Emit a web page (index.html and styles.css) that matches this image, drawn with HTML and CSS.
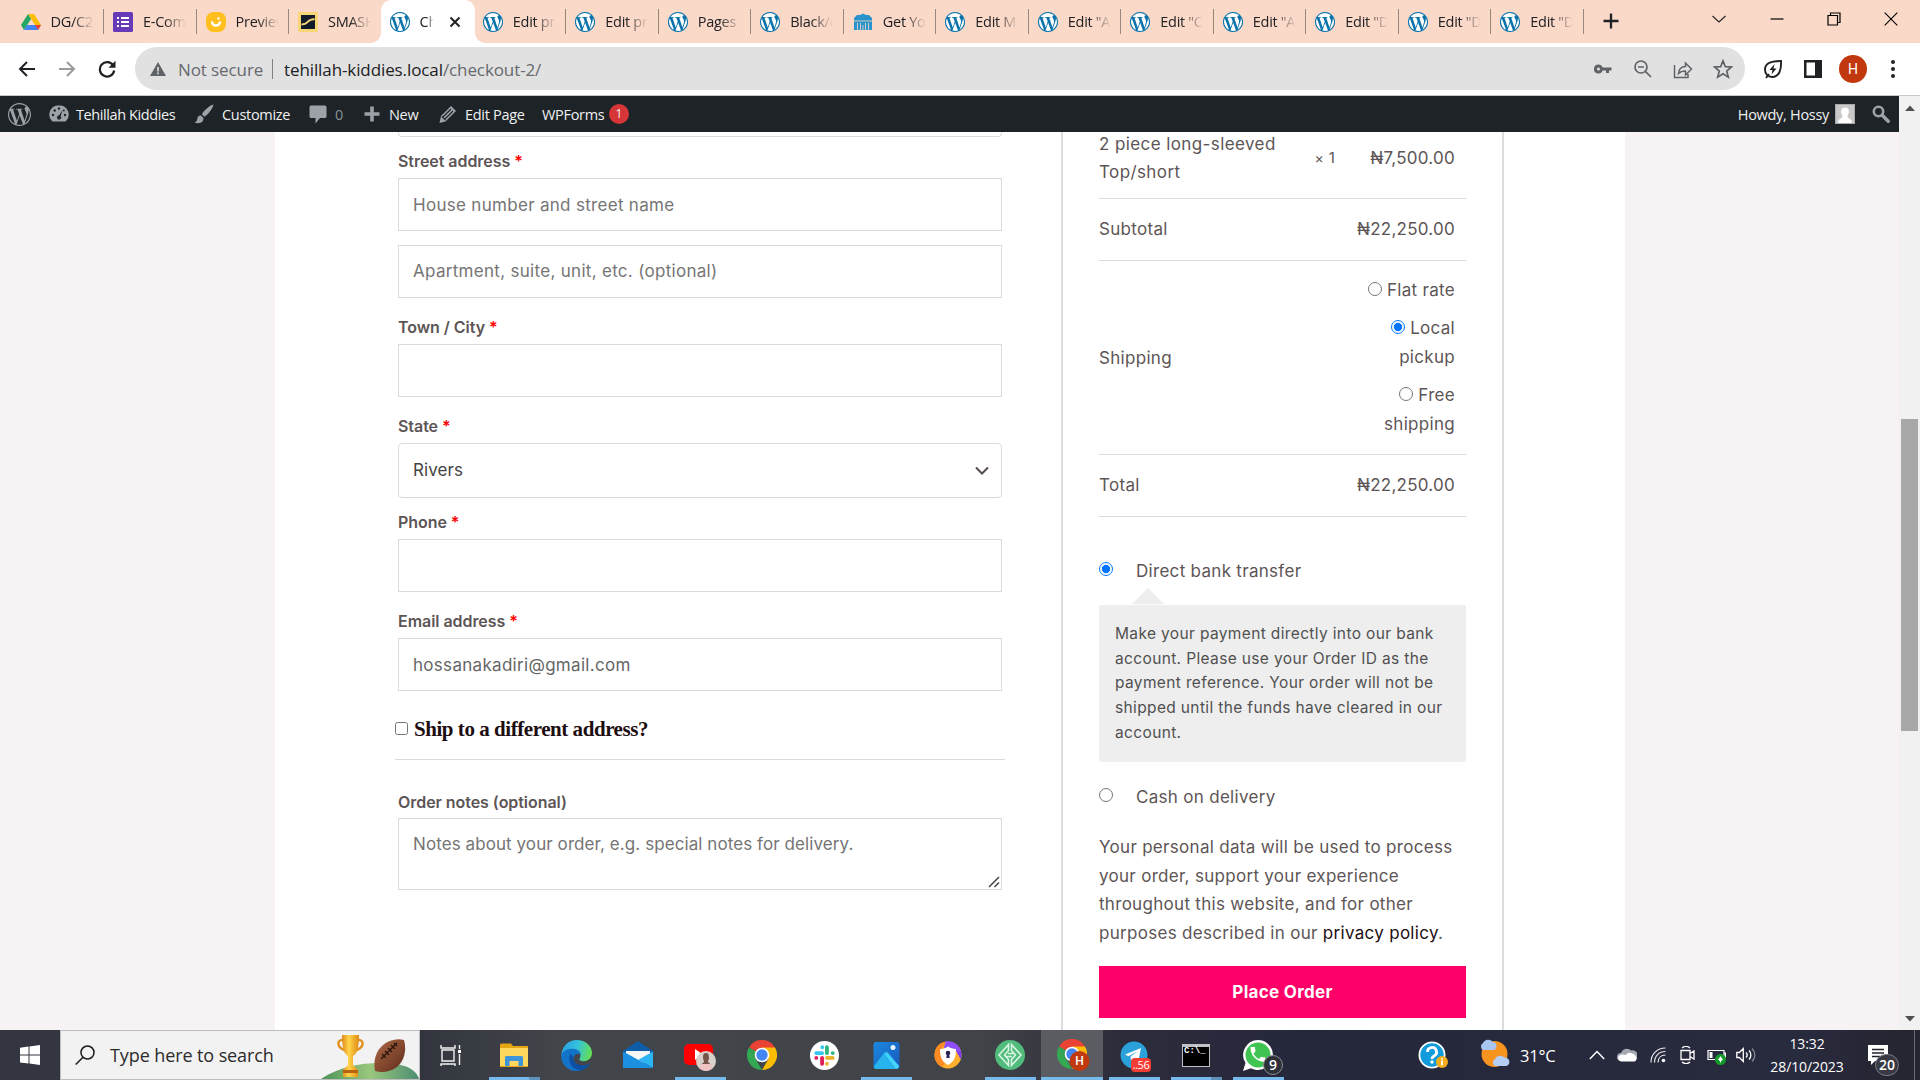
FILE: index.html
```html
<!DOCTYPE html>
<html lang="en">
<head>
<meta charset="utf-8">
<title>Checkout</title>
<link rel="stylesheet" href="styles.css">
</head>
<body>
<svg class="defs" width="0" height="0">
  <defs>
    <symbol id="wp" viewBox="0 0 24 24"><path d="M21.469 6.825c.84 1.537 1.318 3.3 1.318 5.175 0 3.979-2.156 7.456-5.363 9.325l3.295-9.527c.615-1.54.82-2.771.82-3.864 0-.405-.026-.78-.07-1.11m-7.981.105c.647-.03 1.232-.105 1.232-.105.582-.075.514-.93-.067-.899 0 0-1.755.135-2.88.135-1.064 0-2.85-.15-2.85-.15-.585-.03-.661.855-.075.885 0 0 .54.061 1.125.09l1.68 4.605-2.37 7.08L5.354 6.9c.649-.03 1.234-.1 1.234-.1.585-.075.516-.93-.065-.896 0 0-1.746.138-2.874.138-.2 0-.438-.008-.69-.015C4.911 3.15 8.235 1.215 12 1.215c2.809 0 5.365 1.072 7.286 2.833-.046-.003-.091-.009-.141-.009-1.06 0-1.812.923-1.812 1.914 0 .89.513 1.643 1.06 2.531.411.72.89 1.643.89 2.977 0 .915-.354 1.994-.821 3.479l-1.075 3.585-3.9-11.61.001.014zM12 22.784c-1.059 0-2.081-.153-3.048-.437l3.237-9.406 3.315 9.087c.024.053.05.101.078.149-1.12.393-2.325.609-3.582.609M1.211 12c0-1.564.336-3.05.935-4.39L7.29 21.709C3.694 19.96 1.212 16.271 1.211 12M12 0C5.385 0 0 5.385 0 12s5.385 12 12 12 12-5.385 12-12S18.615 0 12 0"/></symbol>
    <symbol id="wpfav" viewBox="0 0 24 24"><circle cx="12" cy="12" r="12" fill="#a5cbe0"/><circle cx="12" cy="12" r="10.8" fill="#fff"/><use href="#wp" width="24" height="24" fill="#0b73aa"/></symbol>
    <symbol id="chrome" viewBox="0 0 30 30"><path d="M15 15 2 7.500A15 15 0 0 1 28 7.500z" fill="#ea4335"/><path d="M2 7.500 8.500 18.700 15 30A15 15 0 0 1 2 7.500z" fill="#34a853"/><path d="M28 7.500A15 15 0 0 1 15 30l6.500-11.300L15 7.500z" fill="#fbbc04"/><path d="M2 7.500 8.600 18.700 15 15z" fill="#34a853"/><circle cx="15" cy="15" r="7.300" fill="#fff"/><circle cx="15" cy="15" r="5.700" fill="#4285f4"/></symbol>
  </defs>
</svg>

<div class="tabstrip">
  <div class="tab"><svg class="fav" viewBox="0 0 20 20"><path d="M7 2h6l7 11h-6z" fill="#fbbc04"/><path d="M7 2 0 13l3 5 7-11z" fill="#23a566"/><path d="M3 18h14l3-5H6z" fill="#4285f4"/><path d="m17 18 3-5h-6z" fill="#ea4335"/></svg><span class="title">DG/C2</span></div>
  <div class="tab"><svg class="fav" viewBox="0 0 20 20"><rect width="20" height="20" rx="1.500" fill="#673ab7"/><path d="M4 5h2v2H4zm4 0h8v2H8zM4 9h2v2H4zm4 0h8v2H8zm-4 4h2v2H4zm4 0h8v2H8z" fill="#fff"/></svg><span class="title">E-Com</span></div>
  <div class="tab"><svg class="fav" viewBox="0 0 20 20"><rect width="20" height="20" rx="7.500" fill="#ffbf1f"/><path d="M6 9.500a4 4 0 0 0 8 0" fill="none" stroke="#fff" stroke-width="2.500"/><circle cx="12.500" cy="6.500" r="1.200" fill="#fff"/></svg><span class="title">Preview</span></div>
  <div class="tab last"><svg class="fav" viewBox="0 0 20 20"><rect width="20" height="20" rx="2" fill="#f7d774"/><rect x="3" y="3" width="14" height="14" fill="#111c2b"/><path d="M3.500 12.500c5 0 5-1.500 6.500-3s3-2 6.500-2.500" fill="none" stroke="#f7d774" stroke-width="1.800"/></svg><span class="title">SMASH</span></div>
  <div class="tab active"><svg class="fav"><use href="#wpfav"/></svg><span class="title">Che</span><svg class="close" viewBox="0 0 12 12"><path d="m1.500 1.500 9 9m0-9-9 9" stroke="#202124" stroke-width="2"/></svg></div>
  <div class="tab"><svg class="fav"><use href="#wpfav"/></svg><span class="title">Edit pro</span></div>
  <div class="tab"><svg class="fav"><use href="#wpfav"/></svg><span class="title">Edit pro</span></div>
  <div class="tab"><svg class="fav"><use href="#wpfav"/></svg><span class="title">Pages</span></div>
  <div class="tab"><svg class="fav"><use href="#wpfav"/></svg><span class="title">Black/c</span></div>
  <div class="tab"><svg class="fav" viewBox="0 0 20 20"><path d="M1 6 4 3h3l3-1.500L13 3h3l3 3v12H1z" fill="#2b93cb"/><path d="M4.500 18v-7m3 7v-7m5 7v-7m3 7v-7M1 9h18M10 18v-5" stroke="#fbd9c8" stroke-width=".8"/></svg><span class="title">Get You</span></div>
  <div class="tab"><svg class="fav"><use href="#wpfav"/></svg><span class="title">Edit M</span></div>
  <div class="tab"><svg class="fav"><use href="#wpfav"/></svg><span class="title">Edit "A</span></div>
  <div class="tab"><svg class="fav"><use href="#wpfav"/></svg><span class="title">Edit "C</span></div>
  <div class="tab"><svg class="fav"><use href="#wpfav"/></svg><span class="title">Edit "A</span></div>
  <div class="tab"><svg class="fav"><use href="#wpfav"/></svg><span class="title">Edit "D</span></div>
  <div class="tab"><svg class="fav"><use href="#wpfav"/></svg><span class="title">Edit "D</span></div>
  <div class="tab"><svg class="fav"><use href="#wpfav"/></svg><span class="title">Edit "D</span></div>
  <svg class="newtab" viewBox="0 0 16 16"><path d="M8 .5v15M.5 8h15" stroke="#202124" stroke-width="2.300"/></svg>
  <div class="winctl">
    <svg viewBox="0 0 14 14"><path d="m.5 4 6.500 6 6.500-6" fill="none" stroke="#222" stroke-width="1.100"/></svg>
    <svg viewBox="0 0 14 14"><path d="M.5 7h13" stroke="#000" stroke-width="1.200"/></svg>
    <svg viewBox="0 0 14 14"><path d="M1 3.500h9.500V13H1zM3.500 3.500V1H13v9.500h-2.500" fill="none" stroke="#000" stroke-width="1.200"/></svg>
    <svg viewBox="0 0 14 14"><path d="m.7.7 12.600 12.600m0-12.600L.7 13.300" stroke="#000" stroke-width="1.100"/></svg>
  </div>
</div>

<div class="toolbar">
  <svg class="nav" viewBox="0 0 18 18"><path d="M17 9H2m7-7L2 9l7 7" fill="none" stroke="#202124" stroke-width="2"/></svg>
  <svg class="nav" viewBox="0 0 18 18"><path d="M1 9h15M9 2l7 7-7 7" fill="none" stroke="#9a9a9a" stroke-width="2"/></svg>
  <svg class="nav" viewBox="0 0 18 18"><path d="M15.200 5.500A7.200 7.200 0 1 0 16.200 10.500" fill="none" stroke="#202124" stroke-width="2.200"/><path d="M17.500.8v7h-7z" fill="#202124"/></svg>
  <div class="omnibox">
    <svg class="warn" viewBox="0 0 16 14"><path d="M8 0 16 14H0z" fill="#5f6368"/><path d="M7.200 5h1.600v4.500H7.200zm0 5.600h1.600v1.600H7.200z" fill="#e1e1e1"/></svg>
    <span class="insecure">Not secure</span>
    <span class="urlsep"></span>
    <span class="url"><b>tehillah-kiddies.local</b>/checkout-2/</span>
    <div class="omniicons">
      <svg viewBox="0 0 20 20"><path d="M5.500 5.500a4.500 4.500 0 1 0 4.200 6H13V14h3v-2.500h2.500v-3H9.700a4.500 4.500 0 0 0-4.200-3zm0 3a1.500 1.500 0 1 1 0 3 1.500 1.500 0 0 1 0-3z" fill="#5f6368"/></svg>
      <svg viewBox="0 0 20 20"><circle cx="8" cy="8" r="6" fill="none" stroke="#5f6368" stroke-width="1.700"/><path d="M5 8h6m1.300 4.300 5.700 5.700" stroke="#5f6368" stroke-width="1.700"/></svg>
      <svg viewBox="0 0 20 20"><path d="M1.500 6v12.500H15V15M5.500 14.500c.5-5 3-7 7-7V4l6 6-6 6v-4c-3 0-5 .5-7 2.500z" fill="none" stroke="#5f6368" stroke-width="1.500"/></svg>
      <svg viewBox="0 0 20 20"><path d="m10 1.800 2.300 5.800 6.200.4-4.800 4 1.600 6.100-5.300-3.400-5.300 3.400L6.300 12 1.500 8l6.200-.4z" fill="none" stroke="#5f6368" stroke-width="1.700"/></svg>
    </div>
  </div>
  <svg class="ext leaf" viewBox="0 0 20 20"><path d="M18 2c.5 8-1.500 16-9 16-4 0-7-3-7-7.500C2 4.500 8 2 18 2zM3 19l3-4" fill="none" stroke="#202124" stroke-width="1.900"/><path d="m11.500 5-5 6h3l-1 4.500 5-6h-3z" fill="#202124"/></svg>
  <svg class="ext" viewBox="0 0 20 20"><path d="M1 1h18v18H1zm2.500 2.500v13H12v-13z" fill="#202124" fill-rule="evenodd"/></svg>
  <span class="profile">H</span>
  <svg class="dots" viewBox="0 0 4 18"><circle cx="2" cy="2" r="2"/><circle cx="2" cy="9" r="2"/><circle cx="2" cy="16" r="2"/></svg>
</div>

<div class="viewport">
  <div class="pagewrap">
    <div class="adminbar">
      <svg class="wplogo" fill="#9ca2a7"><use href="#wp"/></svg>
      <svg class="ab dash" viewBox="0 0 20 20"><path d="M10 1.500a9 9 0 0 0-7.600 14.700c.5.700 1 1.300 1.800 1.300h11.600c.8 0 1.300-.6 1.800-1.300A9 9 0 0 0 10 1.500z" fill="#9ca2a7"/><g fill="#1d2327"><circle cx="10" cy="4.500" r="1.200"/><circle cx="5.700" cy="6.500" r="1.200"/><circle cx="4" cy="11" r="1.200"/><circle cx="16" cy="11" r="1.200"/><circle cx="14.800" cy="6.500" r="1"/><path d="m13.500 6-1.800 6.300a2 2 0 1 1-1.700-.8z"/></g></svg>
      <span class="abt t1">Tehillah Kiddies</span>
      <svg class="ab brush" viewBox="0 0 20 20"><path d="M19.500.5C16 1 9 7 8 10.500l2.500 2.200C14 11 19 4 19.500.5zM7 11.500c-3 0-3.500 2-3.800 4C2.800 17.500 1.500 18 .5 18.500 5 20 9.500 19 9.500 14z" fill="#9ca2a7"/></svg>
      <span class="abt t2">Customize</span>
      <svg class="ab bubble" viewBox="0 0 20 20"><path d="M3 1.500h14a1.500 1.500 0 0 1 1.500 1.500v9.500A1.500 1.500 0 0 1 17 14h-5l-4.500 5.500V14H3a1.500 1.500 0 0 1-1.500-1.500V3A1.500 1.500 0 0 1 3 1.500z" fill="#9ca2a7"/></svg>
      <span class="abt t3">0</span>
      <svg class="ab plus" viewBox="0 0 20 20"><path d="M10 2.500v15M2.500 10h15" stroke="#9ca2a7" stroke-width="3.600"/></svg>
      <span class="abt t4">New</span>
      <svg class="ab pencil" viewBox="0 0 20 20"><path d="m13 2 5 5L7.500 17.500 1.500 19 3 12z" fill="#9ca2a7"/><path d="m5 13 8-8m-6 10 8-8M4 12.500l3.500 3.500" stroke="#1d2327" stroke-width="1.100"/></svg>
      <span class="abt t5">Edit Page</span>
      <span class="abt t6">WPForms</span>
      <span class="count">1</span>
      <span class="abt howdy">Howdy, Hossy</span>
      <svg class="avatar" viewBox="0 0 20 20"><rect width="20" height="20" fill="#c9c9c9"/><path d="M10 3.500c3.500 0 4.300 3 3.700 5.500-.3 1.500-1.200 2.500-1.200 3.500 0 2 4.500 2 4.500 6.500H3c0-4.500 4.500-4.500 4.500-6.500 0-1-.9-2-1.200-3.500C5.700 6.500 6.500 3.500 10 3.500z" fill="#fff"/><path d="M.5.5h19v19H.5z" fill="none" stroke="#a7aaad"/></svg>
      <svg class="absearch" viewBox="0 0 18 18"><circle cx="6.500" cy="6.500" r="4.700" fill="none" stroke="#9ca2a7" stroke-width="2.600"/><path d="m10.500 10.500 5.700 5.700" stroke="#9ca2a7" stroke-width="3.400" stroke-linecap="round"/></svg>
    </div>
    <div class="site">
      <div class="billing">
        <div class="prevfield"></div>
        <label class="lbl short">Street address <i>*</i></label>
        <input class="field" type="text" placeholder="House number and street name">
        <input class="field second" type="text" placeholder="Apartment, suite, unit, etc. (optional)">
        <label class="lbl">Town / City <i>*</i></label>
        <input class="field" type="text">
        <label class="lbl">State <i>*</i></label>
        <div class="select"><span>Rivers</span><svg viewBox="0 0 14 9"><path d="m1 1.500 6 6 6-6" fill="none" stroke="#554d4f" stroke-width="2"/></svg></div>
        <label class="lbl short">Phone <i>*</i></label>
        <input class="field" type="text">
        <label class="lbl mail">Email address <i>*</i></label>
        <input class="field" type="text" value="hossanakadiri@gmail.com">
        <div class="shipto"><input type="checkbox"><span>Ship to a different address?</span></div>
        <label class="lbl notes">Order notes (optional)</label>
        <div class="areawrap">
          <textarea class="field area" placeholder="Notes about your order, e.g. special notes for delivery."></textarea>
          <svg class="grip" viewBox="0 0 12 12"><path d="M1 11 11 1M6.500 11 11 6.500" stroke="#444" stroke-width="1.500" stroke-dasharray="none"/></svg>
        </div>
      </div>
      <div class="review">
        <div class="row product"><span class="pname">2 piece long-sleeved Top/short</span><span class="qty"><small>×</small> 1</span><span class="amt">₦7,500.00</span></div>
        <div class="row"><span>Subtotal</span><span class="amt">₦22,250.00</span></div>
        <div class="row shipping"><span>Shipping</span>
          <ul>
            <li><input type="radio" name="s"> Flat rate</li>
            <li><input type="radio" name="s" checked> Local<br>pickup</li>
            <li><input type="radio" name="s"> Free<br>shipping</li>
          </ul>
        </div>
        <div class="row"><span>Total</span><span class="amt">₦22,250.00</span></div>
        <div class="pay bank"><input type="radio" name="p" checked><span>Direct bank transfer</span></div>
        <div class="paybox">Make your payment directly into our bank<br>account. Please use your Order ID as the<br>payment reference. Your order will not be<br>shipped until the funds have cleared in our<br>account.</div>
        <div class="pay cash"><input type="radio" name="p"><span>Cash on delivery</span></div>
        <p class="privacy">Your personal data will be used to process<br>your order, support your experience<br>throughout this website, and for other<br>purposes described in our <a>privacy policy</a>.</p>
        <button class="place">Place Order</button>
      </div>
    </div>
  </div>
  <div class="scrollbar">
    <svg viewBox="0 0 10 6"><path d="m0 6 5-5.500L10 6z" fill="#505050"/></svg>
    <div class="thumb"></div>
    <svg viewBox="0 0 10 6"><path d="m0 0 5 5.500L10 0z" fill="#505050"/></svg>
  </div>
</div>

<div class="taskbar">
  <div class="start"><svg viewBox="0 0 20 20"><path d="M0 2.800 8.500 1.600v8H0zM9.500 1.500 20 0v9.600H9.500zM0 10.600h8.500v8L0 17.400zm9.500 0H20V20L9.500 18.600z" fill="#fff"/></svg></div>
  <div class="search">
    <svg class="glass" viewBox="0 0 20 20"><circle cx="12.500" cy="7.500" r="6.500" fill="none" stroke="#1a1a1a" stroke-width="1.500"/><path d="M8 12.200.7 19.500" stroke="#1a1a1a" stroke-width="1.500"/></svg>
    <span>Type here to search</span>
    <svg class="doodle" viewBox="0 0 98 48">
      <defs><linearGradient id="hill" x1="0" x2="1"><stop offset="0" stop-color="#4d9358"/><stop offset=".5" stop-color="#9ac77c"/><stop offset="1" stop-color="#4c8e72"/></linearGradient><linearGradient id="gold" x1="0" x2="1"><stop offset="0" stop-color="#e08a1a"/><stop offset=".4" stop-color="#ffd54a"/><stop offset="1" stop-color="#e08a12"/></linearGradient><linearGradient id="ball" x1="0" x2="1" y1="0" y2="1"><stop offset="0" stop-color="#b06a45"/><stop offset="1" stop-color="#5e2b1c"/></linearGradient></defs>
      <path d="M0 48C18 36 38 32 60 32c20 0 34 4 38 16z" fill="url(#hill)"/>
      <path d="M23 9c-8-1-8 8 3 11m10-11c8-1 8 8-3 11" fill="none" stroke="#e0901c" stroke-width="2.400"/>
      <path d="M21 4h17c0 12-2 19-6 21v8c0 3 5 4 5 7v6H22v-6c0-3 5-4 5-7v-8c-4-2-6-9-6-21z" fill="url(#gold)"/><path d="M22 39h15v3H22z" fill="#b7620e"/>
      <path d="M83 9c3 11 0 21-7 27-7 5-15 6-22 4-2-11 1-20 8-26 6-5 14-7 21-5z" fill="url(#ball)"/><path d="m60 28 16-16m-15 11 4 4m-1-7 4 4m-1-7 4 4m-1-7 4 4m-1-6 3 3" fill="none" stroke="#30180f" stroke-width="1.500"/>
    </svg>
  </div>
  <div class="app"><svg width="22" height="22" viewBox="0 0 22 22"><path d="M2 6h12v11H2zM1 1v3h14V1M1 22v-2h14v2M19.500 1v4m0 5v11" fill="none" stroke="#f2f2f2" stroke-width="1.400"/><path d="M18 6h3v3h-3z" fill="#fff"/></svg></div>
  <div class="app run multi"><svg width="30" height="26" viewBox="0 0 30 26"><path d="M1 3a1.500 1.500 0 0 1 1.500-1.500H12L14 4h15v21H1z" fill="#e6a613"/><path d="M1 6h28v17a1 1 0 0 1-1 1H2a1 1 0 0 1-1-1z" fill="#ffd95e"/><path d="M6 24V15.500A1.500 1.500 0 0 1 7.500 14h15a1.500 1.500 0 0 1 1.500 1.500V24h-4.500v-5h-9v5z" fill="#3f95d9"/></svg></div>
  <div class="app"><svg width="31" height="31" viewBox="0 0 30 30"><defs><linearGradient id="edge" x1="0" x2="1" y1=".2" y2=".4"><stop offset="0" stop-color="#2b9fe0"/><stop offset=".5" stop-color="#33c1de"/><stop offset="1" stop-color="#62df58"/></linearGradient></defs><path d="M.5 13C2 5 8 0 15 0c9 0 15 6 15 12.500 0 5-4 8-8.500 8-3.500 0-4.500-1.500-3-3.500C20 13 17 9.500 11.500 9.500 6 9.500 1.500 12 .5 16z" fill="url(#edge)"/><path d="M.2 14.500C2 10.500 6 8.500 11 8.500c5 0 8 2.500 8 5.500-3.500-2-7 .5-7 4.500 0 4.500 5 7.500 10.500 6.500 2-.4 4-1.300 5.300-2.200C25 27.500 20 30 15 30 6.500 30-.5 23 .2 14.500z" fill="#1273c9"/><path d="M9 13c-3 8 1 15.500 10 16.500 4-1 7.500-3.700 9-7-2 1.500-4 2-6.500 2-6 0-10-3-9.500-7z" fill="#0d4fa3"/></svg></div>
  <div class="app"><svg width="30" height="28" viewBox="0 0 30 28"><path d="M0 10 15 0l15 10v5H0z" fill="#0f5ca8"/><path d="M3 10h24v12H3z" fill="#f1f1f1"/><path d="M0 10.500 30 27V10.500L15 19z" fill="#2cb5f2"/><path d="M0 10.500V27h30z" fill="#1b8fe0"/><path d="M3 10.500h24L15 18.500z" fill="#f7f7f7"/></svg></div>
  <div class="app run"><svg width="32" height="32" viewBox="0 0 32 32"><rect x="0" y="5" width="29" height="21" rx="5" fill="#f00"/><path d="m11 10 8 5.500-8 5.500z" fill="#fff"/><circle cx="22" cy="22" r="10" fill="#d8d0cb"/><path d="M22 14c2.500 0 3 2 3 4.500s-1 3-1 4 2 1.500 3 3.500H17c1-2 3-2.500 3-3.500s-1-1.500-1-4 .5-4.500 3-4.500z" fill="#75544a"/><path d="M17.500 25h9l2 4.500c-4 3.300-9 3.300-13 0z" fill="#efc3c4"/></svg></div>
  <div class="app"><svg width="30" height="30"><use href="#chrome"/></svg></div>
  <div class="app"><svg width="29" height="29" viewBox="0 0 30 30"><circle cx="15" cy="15" r="15" fill="#fff"/><g stroke-width="4" stroke-linecap="round"><path d="M12.700 6.500v0M6.500 12.500h6" stroke="#36c5f0"/><path d="M17.500 6.500v6m6 0v0" stroke="#2eb67d"/><path d="M17.500 17.500h6m-6 6v0" stroke="#ecb22e"/><path d="M12.500 17.500v6m-6-6v0" stroke="#e01e5a"/></g></svg></div>
  <div class="app run"><svg width="27" height="27" viewBox="0 0 27 27"><defs><linearGradient id="pho" x1="0" x2="1" y1="0" y2="1"><stop offset="0" stop-color="#1a8ae0"/><stop offset="1" stop-color="#1a56ba"/></linearGradient></defs><rect x=".5" width="26" height="27" rx="2.500" fill="url(#pho)"/><path d="m1 24 10-13c1.500-2 3-2 4.500 0L26 24v1c0 1-1 2-2 2H3c-1 0-2-1-2-2z" fill="#27b4ee"/><path d="m12 12 2-1 12 13-3 3z" fill="#48d3fa"/><circle cx="20" cy="5.500" r="2.500" fill="#e5f3fd"/></svg></div>
  <div class="app"><svg width="28" height="28" viewBox="0 0 28 28"><circle cx="14" cy="14" r="13.500" fill="#ffb02e"/><path d="M11 .8A13.500 13.500 0 0 1 27.500 14c0 2-.5 3-1 4L20 6z" fill="#7b3ff2"/><path d="M11 .8c6-2 14 2 16 10L10 7z" fill="#8d4dfb"/><path d="M1 10C3 4 7 1 12 .7L8 8l3 15-3 3C2 23-.5 17 1 10z" fill="#fd8a22"/><path d="M6 8c4 0 6-1 8-2.500C16 7 19 8 22 8c0 8-2 13-8 16C8 21 6 16 6 8z" fill="#fff"/><circle cx="14" cy="12" r="2.300" fill="#2b2457"/><path d="M13 12h2l.7 5h-3.400z" fill="#2b2457"/></svg></div>
  <div class="app run"><svg width="30" height="30" viewBox="0 0 30 30"><circle cx="15" cy="15" r="15" fill="#51bb7b"/><path d="M13.500 4.500v6L9.500 15l4 4.500v6L4 15zm3 0v6l4 4.500-4 4.500v6L26 15zM13 13.500h6M11 16.500h6" fill="none" stroke="#d9f5e3" stroke-width="1.600"/></svg></div>
  <div class="app current"><svg width="34" height="32" viewBox="0 0 34 32"><use href="#chrome" width="30" height="30"/><circle cx="22.500" cy="22" r="10" fill="#c0390f"/></svg><em>H</em></div>
  <div class="app run tg"><svg width="28" height="28" viewBox="0 0 28 28"><circle cx="14" cy="14" r="13.500" fill="#2aa1da"/><path d="m5 13.500 16-6.500-2.800 14-5-3.700-2.200 2.200-.5-4L18 10l-9.500 5.300z" fill="#fff"/></svg><em>..56</em></div>
  <div class="app run multi"><svg width="28" height="23" viewBox="0 0 28 23"><rect width="28" height="23" fill="#bfc3c7"/><rect x="1" y="3" width="26" height="19" fill="#000"/></svg><em class="cmd">C:\_</em></div>
  <div class="app run wa"><svg width="30" height="31" viewBox="0 0 30 31"><path d="M15 0a15 15 0 0 1 0 30c-2.500 0-5-.6-7-1.800L0 31l2.500-8A15 15 0 0 1 15 0z" fill="#fff"/><circle cx="15" cy="15" r="12.500" fill="#3fc351"/><path transform="translate(5 4.500) scale(.83)" d="M6.620 10.790c1.440 2.830 3.760 5.140 6.590 6.590l2.200-2.200c.27-.27.67-.36 1.020-.24 1.120.37 2.330.57 3.570.57.550 0 1 .45 1 1V20c0 .55-.45 1-1 1-9.390 0-17-7.610-17-17 0-.55.45-1 1-1h3.500c.550 0 1 .45 1 1 0 1.250.2 2.450.57 3.570.11.350.03.740-.25 1.020l-2.200 2.200z" fill="#fff"/></svg><em>9</em></div>
  <div class="tray">
    <svg class="help" width="30" height="28" viewBox="0 0 30 28"><circle cx="14" cy="14" r="13.500" fill="#fff"/><circle cx="14" cy="14" r="11.700" fill="#0f9bdc"/><path d="M9.500 11a4.500 4.500 0 1 1 6.500 4c-1.500.8-2 1.500-2 3" fill="none" stroke="#fff" stroke-width="2.800"/><circle cx="14" cy="21" r="1.700" fill="#fff"/><circle cx="24" cy="21" r="6" fill="#f4ae1c"/><path d="M24 19.500v5m0-7.500v1.500" stroke="#fff" stroke-width="1.800"/></svg>
    <svg class="weather" width="31" height="30" viewBox="0 0 31 30"><circle cx="15.500" cy="16" r="13" fill="#f7941f"/><path d="M4 12a4 4 0 0 1 0-7 6 6 0 0 1 10-1c4 0 5 6 1 8z" fill="#a9c5f2"/><path d="M16 28a4 4 0 0 1 0-7 6 6 0 0 1 9.500-1.500c5-.5 7 6.500 2 8.500z" fill="#b4cdf5"/></svg>
    <span class="temp">31°C</span>
    <svg class="up" width="16" height="10" viewBox="0 0 16 10"><path d="m.8 9 7.200-7.500L15.200 9" fill="none" stroke="#fff" stroke-width="1.500"/></svg>
    <svg class="cloud" width="20" height="14" viewBox="0 0 20 14"><path d="M4 13a4 4 0 0 1 0-8 6 6 0 0 1 10-2.500 5 5 0 0 1 3 10.500z" fill="#a7a9b2"/><path d="M4 13.500a3.500 3.500 0 0 1-1-6.500c3-1 4 0 6 0 1-2 4-3 6-1.500 2 0 5 3 4.500 5.500s-2 2.500-3 2.500z" fill="#fff"/></svg>
    <svg class="wifi" width="16" height="16" viewBox="0 0 16 16"><path d="M1 15.500C1 7 7 1 15.500 1M4.500 15.500c0-6.500 4.500-11 11-11M8 15.500C8 11 11 8 15.500 8" fill="none" stroke="#e8e8ec" stroke-width="1.200"/><circle cx="13.500" cy="13.500" r="1.800" fill="#fff"/></svg>
    <svg class="cam" width="15" height="18" viewBox="0 0 15 18"><path d="M1 4.500h9v9H1zm9 3 4-2.500v8l-4-2.500M2 2c2.500-2 5.500-2 8 0M2 16c2.500 2 5.500 2 8 0" fill="none" stroke="#fff" stroke-width="1.300"/></svg>
    <svg class="bat" width="19" height="16" viewBox="0 0 19 16"><path d="M1 1.500h16v9H1zM17 4h1.500v4H17" fill="none" stroke="#fff" stroke-width="1.200"/><path d="M2.500 3h3v6h-3z" fill="#fff"/><circle cx="13.500" cy="10.500" r="5.500" fill="#139a29"/><path d="M13.500 7.500v6m-2-3 2-2.500 2 2.500-2 1.500z" fill="#fff" stroke="#fff"/></svg>
    <svg class="vol" width="20" height="18" viewBox="0 0 20 18"><path d="M.8 6.500h2.500l4-4v13l-4-4H.8zM10 6.500c1.500 1.500 1.500 3.500 0 5M13 4.500c2.500 2.500 2.500 6.500 0 9" fill="none" stroke="#fff" stroke-width="1.300"/><path d="M16 2.500c3.800 3.800 3.800 9.200 0 13" fill="none" stroke="#85868f" stroke-width="1.300"/></svg>
    <span class="clock">13:32<br>28/10/2023</span>
    <div class="notif"><svg width="20" height="20" viewBox="0 0 20 20"><path d="M0 0h20v16H7l-4 4v-4H0z" fill="#fff"/><path d="M4 4.500h12M4 8h12M4 11.500h8" stroke="#22222e" stroke-width="1.400"/></svg><em>20</em></div>
  </div>
</div>
</body>
</html>
```
FILE: styles.css
```css
* { box-sizing: border-box; }
body { margin: 0; width: 1920px; height: 1080px; overflow: hidden; font-family: "Open Sans", "Noto Sans", sans-serif; display: flex; flex-direction: column; }
svg { flex: none; display: block; }
.defs { position: absolute; }
em, i { font-style: normal; }

.tabstrip { height: 43px; background: #fbd9c8; display: flex; align-items: flex-start; padding-left: 11.600px; flex: none; }
.tab { width: 92.500px; height: 43px; display: flex; align-items: center; flex: none; padding-left: 9px; position: relative; }
.tab:not(.last):not(.active)::after { content: ""; width: 1px; height: 25px; background: #97867d; margin-left: auto; }
.tab .fav { width: 20px; height: 20px; margin-right: 10px; }
.tab .title { width: 43px; overflow: hidden; white-space: nowrap; font-size: 14.500px; letter-spacing: -.3px; color: #202124; line-height: 22px; -webkit-mask-image: linear-gradient(90deg, #000 50%, transparent 100%); mask-image: linear-gradient(90deg, #000 50%, transparent 100%); }
.tab.active { background: #fff; border-radius: 10px 10px 0 0; width: 94px; margin: 0 -.800px 0 -1px; }
.tab.active::before, .tab.active::after { content: ""; position: absolute; bottom: 0; width: 10px; height: 10px; }
.tab.active::before { left: -10px; background: radial-gradient(circle at 0 0, transparent 9.500px, #fff 10px); }
.tab.active::after { right: -10px; background: radial-gradient(circle at 100% 0, transparent 9.500px, #fff 10px); }
.tab.active .title { width: 14px; }
.tab .close { width: 12px; height: 12px; margin-left: 15px; }
.newtab { width: 16px; height: 16px; margin: 13px 0 0 19px; }
.winctl { display: flex; gap: 43.200px; margin: 12px 0 0 auto; padding-right: 22px; }
.winctl svg { width: 14px; height: 14px; }

.toolbar { height: 53px; background: #fff; border-bottom: 1px solid #c9c9c9; display: flex; align-items: center; flex: none; padding: 0 0 1px 18px; }
.nav { width: 18px; height: 18px; margin-right: 22px; }
.omnibox { width: 1610px; height: 43px; border-radius: 22px; background: #e1e1e1; margin-left: -3px; display: flex; align-items: center; padding-left: 15px; font-size: 17px; color: #66696d; }
.warn { width: 16px; height: 14px; }
.insecure { margin-left: 12px; width: 84px; white-space: nowrap; letter-spacing: -.1px; padding-top: 2px; }
.urlsep { width: 1px; height: 20px; background: #808080; margin: 0 11px 0 10px; }
.url { white-space: nowrap; letter-spacing: -.100px; padding-top: 2px; }
.url b { font-weight: 400; color: #202124; }
.omniicons { display: flex; gap: 20px; margin-left: auto; padding-right: 12px; }
.omniicons svg { width: 20px; height: 20px; }
.ext { width: 20px; height: 20px; margin-left: 20px; }
.ext.leaf { margin-left: 18px; }
.profile { width: 28px; height: 28px; border-radius: 50%; background: #c1380f; color: #fff; font: 14px/28px Roboto, sans-serif; text-align: center; margin-left: 16px; }
.dots { width: 4px; height: 18px; margin-left: 24px; fill: #202124; }

.viewport { height: 934px; flex: none; display: flex; overflow: hidden; }
.pagewrap { width: 1899px; background: #f7f3f4; display: flex; flex-direction: column; }
.adminbar { height: 36px; flex: none; background: #1d2327; display: flex; align-items: center; color: #f0f0f1; font-size: 14.500px; padding-left: 8px; }
.wplogo { width: 23px; height: 23px; }
.ab { width: 20px; height: 20px; }
.abt { white-space: nowrap; letter-spacing: -.3px; line-height: 34px; padding-top: 1px; }
.dash { margin: 0 7px 0 18px; } .t1 { width: 100px; letter-spacing: -.4px; }
.brush { margin: 0 8px 0 18px; } .t2 { width: 68px; }
.bubble { margin: 0 7px 0 18px; } .t3 { width: 8px; color: #8b9095; }
.plus { margin: 0 7px 0 19px; } .t4 { width: 30px; }
.pencil { margin: 0 7px 0 19px; } .t5 { width: 60px; }
.t6 { margin-left: 17px; width: 62px; }
.count { width: 20px; height: 20px; border-radius: 50%; background: #d63638; font-size: 12px; line-height: 19px; text-align: center; margin-left: 5px; }
.howdy { margin-left: auto; }
.avatar { width: 20px; height: 20px; margin: 0 17px 0 6px; }
.absearch { width: 18px; height: 18px; margin-right: 9px; }

.site { width: 1350px; height: 898px; margin-left: 275px; background: #fff; padding-left: 120px; display: flex; font-family: Inter, "Open Sans", sans-serif; font-size: 17px; color: #5d5556; overflow: hidden; flex: none; }
.billing { width: 610px; padding: 0 3px; display: flex; flex-direction: column; }
.prevfield { height: 5px; flex: none; border: 1px solid #dcdcdc; border-top: 0; border-radius: 0 0 4px 4px; }
.lbl { height: 46px; padding-top: 12px; line-height: 34px; font-size: 16px; font-weight: 600; letter-spacing: -.050px; flex: none; }
.lbl.short { height: 41px; padding-top: 8px; line-height: 33px; }
.lbl.mail { padding-top: 13px; line-height: 33px; }
.lbl i { color: #f00; }
.field { display: block; width: 604px; height: 53px; flex: none; margin: 0; border: 1px solid #dadada; background: #fff; padding: 0 14px; font: 400 17px Inter, sans-serif; letter-spacing: .3px; color: #666; outline: 0; }
.field::placeholder { color: #757575; opacity: 1; }
.field.second { margin-top: 14px; padding-bottom: 2px; }
.select { height: 55px; flex: none; border: 1px solid #dadada; border-radius: 4px; display: flex; align-items: center; justify-content: space-between; padding: 0 12px 0 14px; color: #444; font-size: 17px; letter-spacing: .1px; }
.select span { padding-bottom: 2px; }
.select svg { width: 14px; height: 9px; }
.shipto { height: 69px; flex: none; margin: 0 -3px; border-bottom: 1px solid #dcdcdc; display: flex; align-items: center; padding-top: 9px; color: #1d0e12; font: 700 21px "Liberation Serif", serif; letter-spacing: -.45px; }
.shipto input { width: 13px; height: 13px; margin: 0 6px 3px 0; }
.lbl.notes { height: 58px; padding-top: 25px; }
.areawrap { position: relative; height: 73px; }
.area { height: 72px; padding-top: 15px; resize: none; letter-spacing: .080px; }
.grip { position: absolute; right: 2px; bottom: 3px; width: 12px; height: 12px; }

.review { width: 443px; height: 920px; flex: none; margin-left: 56px; border: solid #dcdcdc; border-width: 0 2px; padding: 0 36px; letter-spacing: .3px; }
.row { height: 62px; border-bottom: 1px solid #dcdcdc; display: flex; justify-content: space-between; align-items: center; padding: 0 11px 2px 0; }
.row.product { height: 67px; padding-bottom: 14px; line-height: 28px; }
.pname { width: 190px; margin-top: 0; letter-spacing: .4px; }
.qty { width: 30px; font-size: 15px; }
.qty small { font-size: 14px; }
.amt { letter-spacing: .250px; }
.row.shipping { height: 194px; padding-bottom: 0; }
.row ul { list-style: none; margin: 0; padding: 0; text-align: right; line-height: 29px; }
.row li + li { margin-top: 9px; }
.row li input { width: 14px; height: 14px; margin: 0; }
.pay { display: flex; align-items: center; height: 30px; }
.pay input { width: 14px; height: 14px; margin: 0 23px 4px 0; }
.pay.bank { margin-top: 39px; }
.paybox { position: relative; margin-top: 19px; height: 157px; background: #eee; border-radius: 2px; padding: 17px 16px 0; font-size: 15.500px; letter-spacing: .360px; line-height: 24.700px; color: #515151; white-space: nowrap; }
.paybox::before { content: ""; position: absolute; left: 33px; top: -17px; border: solid transparent; border-width: 0 16px 16px; border-bottom-color: #eee; }
.pay.cash { margin-top: 20px; }
.privacy { margin: 21px 0 0; line-height: 28.700px; white-space: nowrap; }
.privacy a { color: #1d0e12; }
.place { display: block; width: 367px; height: 52px; border: 0; margin-top: 18px; background: #ff0068; color: #fff; font: 700 17px Inter, sans-serif; letter-spacing: .3px; }

.scrollbar { width: 21px; background: #f1f1f1; display: flex; flex-direction: column; align-items: center; padding: 9px 0 8px; }
.scrollbar svg { width: 10px; height: 6px; }
.thumb { width: 17px; height: 312px; margin: 308px 0 auto; background: #a8a8a8; flex: none; }

.taskbar { height: 50px; flex: none; display: flex; background: linear-gradient(90deg, #333640 0, #32353d 420px, #42464b 560px, #404347 980px, #2d2c3b 1120px, #25273b 1300px, #282a3e 1800px, #25252f 100%); }
.start { width: 60px; display: flex; justify-content: center; align-items: center; }
.start svg { width: 20px; height: 20px; }
.search { width: 360px; background: #f2f2f2; border: 1px solid #bdbdbd; display: flex; align-items: center; padding-left: 14px; font-size: 18px; color: #2b2b2b; position: relative; }
.search span { margin-left: 15px; white-space: nowrap; letter-spacing: -.100px; }
.glass { width: 20px; height: 20px; }
.doodle { width: 98px; height: 48px; margin-left: auto; }
.app { width: 62px; height: 50px; display: flex; justify-content: center; align-items: center; position: relative; flex: none; }
.search + .app { margin-right: 1px; }
.app.run::after, .app.current::after { content: ""; position: absolute; left: 5.500px; right: 5.500px; bottom: 0; height: 3px; background: #76b9ed; }
.app.multi::after { background: linear-gradient(90deg, #76b9ed 40px, #5e90ba 40px); }
.app.current { background: #5b5b62; }
.app.current svg { margin-left: 4px; }
.app.current::after { left: 0; right: 0; }
.app em { position: absolute; color: #fff; text-align: center; }
.app.current em { left: 28.500px; top: 21px; width: 20px; font: 500 12px/20px Roboto, sans-serif; }
.app.tg em { left: 28px; top: 28px; width: 20px; height: 14px; border-radius: 4px; background: #f23c34; font: 11px/14px "Open Sans", sans-serif; letter-spacing: -.5px; }
.app em.cmd { left: 19px; top: 15px; font: 700 9px/12px "Liberation Mono", monospace; }
.app.wa em { left: 36px; top: 25px; width: 20px; height: 20px; border-radius: 50%; background: #2f3138; border: 1px solid #8b8d93; font: 600 14px/18px "Open Sans", sans-serif; }
.tray { flex: 1; display: flex; align-items: center; color: #fff; border-right: 1px solid #6b6c76; margin-right: 5px; }
.help { margin-left: 129px; }
.weather { margin-left: 31px; margin-top: -4px; }
.temp { margin-left: 10px; width: 38px; font-size: 16.500px; letter-spacing: -.2px; }
.up { margin-left: 31px; }
.cloud { margin-left: 12px; }
.wifi { margin-left: 13px; }
.cam { margin-left: 14px; }
.bat { margin-left: 12px; margin-top: 3px; }
.vol { margin-left: 10px; }
.clock { margin-left: 13px; width: 76px; white-space: nowrap; text-align: center; font-size: 14px; line-height: 23px; letter-spacing: -.1px; }
.notif { margin-left: 23px; position: relative; }
.notif em { position: absolute; left: 7px; top: 9px; width: 24px; height: 22px; border-radius: 11px; background: #383942; border: 1px solid #787982; font-size: 14px; font-weight: 600; line-height: 20px; text-align: center; }
```
